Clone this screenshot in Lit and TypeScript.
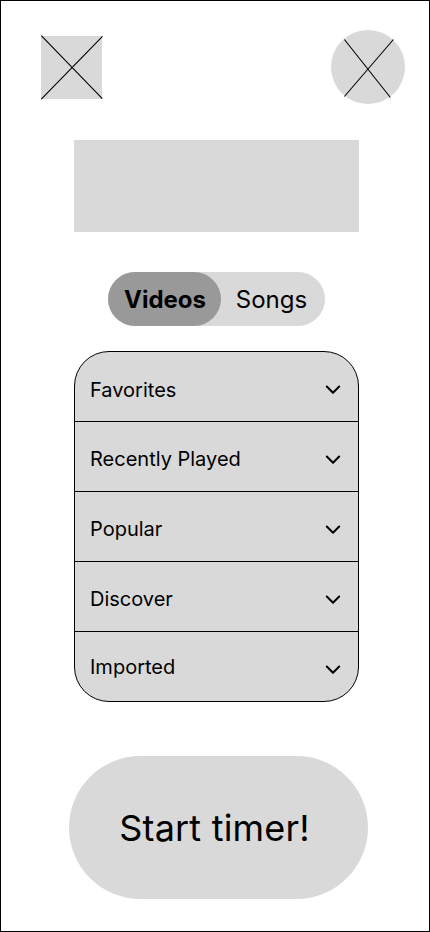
import { LitElement, html, css } from "lit";
import { customElement, state } from "lit/decorators.js";
import { classMap } from "lit/directives/class-map.js";

@customElement("category-row")
class CategoryRow extends LitElement {
  static styles = css`
    :host {
      display: flex;
      justify-content: space-between;
      align-items: flex-start;
      box-sizing: border-box;
      height: 70px;
      padding: 25px 17px 0 15px;
      border-bottom: 1px solid #000;
    }
    :host(:first-of-type) {
      padding-top: 26px;
    }
    :host(:last-of-type) {
      padding-top: 23px;
      height: 69px;
      border-bottom: 0;
    }
    .label {
      font-size: 20px;
      line-height: 24px;
      white-space: nowrap;
    }
    .chevron {
      display: block;
      flex: none;
      width: 16px;
      height: 10px;
      margin-top: 8px;
    }
    :host(:first-of-type) .chevron {
      margin-top: 7px;
    }
    :host(:last-of-type) .chevron {
      margin-top: 10px;
    }
  `;

  render() {
    return html`
      <span class="label"><slot></slot></span>
      <svg class="chevron" viewBox="0 0 16 10" fill="none" stroke="#000" stroke-width="2" stroke-linecap="round" stroke-linejoin="round">
        <path d="M1.8 1.5 L8 7.7 L14.2 1.5" />
      </svg>
    `;
  }
}

@customElement("app-root")
class AppRoot extends LitElement {
  @state() private tab = "Videos";

  static styles = css`
    :host {
      display: block;
      font-family: Inter, sans-serif;
      font-optical-sizing: none;
      color: #000;
    }
    .screen {
      box-sizing: border-box;
      display: flex;
      flex-direction: column;
      width: 430px;
      height: 932px;
      padding-top: 29px;
      border: 1px solid #000;
      background: #fff;
      overflow: hidden;
    }
    .top {
      display: flex;
      justify-content: space-between;
      align-items: flex-start;
      height: 74px;
      padding: 0 24px 0 40px;
    }
    .logo {
      width: 61px;
      height: 63px;
      margin-top: 6px;
      background: #d9d9d9;
    }
    .avatar {
      width: 74px;
      height: 74px;
      border-radius: 50%;
      background: #d9d9d9;
    }
    .cross {
      display: block;
      width: 100%;
      height: 100%;
      overflow: visible;
      stroke: #000;
      stroke-width: 1.1;
    }
    .banner {
      width: 285px;
      height: 92px;
      margin: 36px 0 0 73px;
      background: #d9d9d9;
    }
    .tabs {
      display: flex;
      width: 217px;
      height: 54px;
      margin: 40px 0 0 107px;
      border-radius: 27px;
      background: #d9d9d9;
    }
    button {
      border: 0;
      padding: 0;
      margin: 0;
      font: inherit;
      font-optical-sizing: none;
      color: inherit;
      background: none;
    }
    .tab {
      width: 104px;
      padding: 1px 3px 0 0;
      font-size: 24px;
      line-height: 53px;
    }
    .tab.active {
      width: 113px;
      padding: 1px 0 0 1px;
      border-radius: 27px;
      background: #999;
      font-weight: 700;
    }
    .list {
      box-sizing: border-box;
      width: 285px;
      height: 351px;
      margin: 25px 0 0 73px;
      border: 1px solid #000;
      border-radius: 35px;
      background: #d9d9d9;
      overflow: hidden;
    }
    .start {
      width: 299px;
      height: 143px;
      margin: 54px 0 0 68px;
      padding: 2px 8px 0 0;
      border-radius: 71.5px;
      background: #d9d9d9;
      font-size: 36px;
      letter-spacing: 0.2px;
      line-height: 141px;
    }
  `;

  render() {
    const tabs = ["Videos", "Songs"];
    const rows = ["Favorites", "Recently Played", "Popular", "Discover", "Imported"];
    return html`
      <main class="screen">
        <header class="top">
          <div class="logo">
            <svg class="cross" viewBox="0 0 61 63">
              <path d="M0.3 -0.4 L61.3 62.6 M0.3 63.2 L61.5 0.3" />
            </svg>
          </div>
          <div class="avatar">
            <svg class="cross" viewBox="0 0 74 74">
              <path d="M13.4 9.5 L59.4 67.5 M62.4 9.5 L13.4 66.5" />
            </svg>
          </div>
        </header>
        <div class="banner"></div>
        <nav class="tabs">
          ${tabs.map(
            (t) => html`<button
              class=${classMap({ tab: true, active: t === this.tab })}
              @click=${() => (this.tab = t)}
            >${t}</button>`
          )}
        </nav>
        <section class="list">
          ${rows.map((r) => html`<category-row>${r}</category-row>`)}
        </section>
        <button class="start">Start timer!</button>
      </main>
    `;
  }
}
